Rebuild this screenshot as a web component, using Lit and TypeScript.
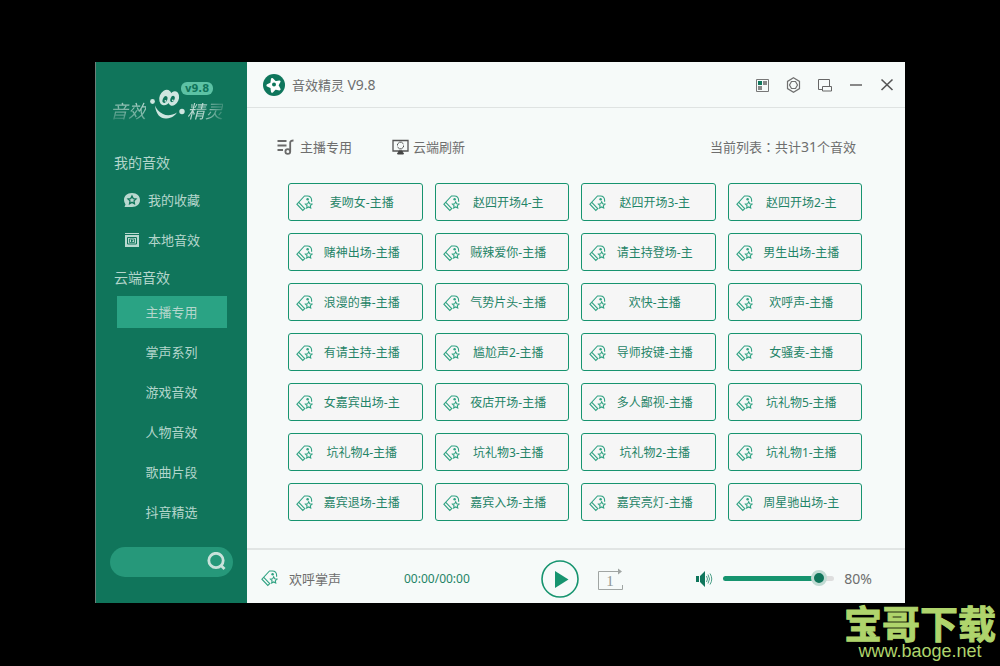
import { LitElement, html, css } from "lit";
import { classMap } from "lit/directives/class-map.js";
import { styleMap } from "lit/directives/style-map.js";

const CLOUD_LISTS = ["主播专用", "掌声系列", "游戏音效", "人物音效", "歌曲片段", "抖音精选"];

const SOUNDS = [
  "麦吻女-主播", "赵四开场4-主", "赵四开场3-主", "赵四开场2-主",
  "赌神出场-主播", "贼辣爱你-主播", "请主持登场-主", "男生出场-主播",
  "浪漫的事-主播", "气势片头-主播", "欢快-主播", "欢呼声-主播",
  "有请主持-主播", "尴尬声2-主播", "导师按键-主播", "女骚麦-主播",
  "女嘉宾出场-主", "夜店开场-主播", "多人鄙视-主播", "坑礼物5-主播",
  "坑礼物4-主播", "坑礼物3-主播", "坑礼物2-主播", "坑礼物1-主播",
  "嘉宾退场-主播", "嘉宾入场-主播", "嘉宾亮灯-主播", "周星驰出场-主",
];

const STAR = "M0-5 1.6-1.7 5-1.3 2.5 1.1 3.1 4.6 0 2.9-3.1 4.6-2.5 1.1-5-1.3-1.6-1.7Z";

const tagIcon = html`<svg class="tag" viewBox="0 0 17 17" width="17" height="17" aria-hidden="true">
  <g fill="none" stroke="currentColor" stroke-width="1.1">
    <path d="M15.6 6.8V5Q15.400 1.200 11.500 1H8.500L.9 9.200l5.900 6.300 2.500-2.300M2.800 7.300l5.900 6.300" />
    <path transform="translate(12.7 10) scale(.66)" stroke-width="1.6" d=${STAR} />
  </g>
  <circle cx="11.600" cy="4.300" r="1.200" fill="currentColor" />
</svg>`;

class AppRoot extends LitElement {
  static properties = {
    active: { state: true },
    level: { state: true },
  };

  declare active: string;
  declare level: number;

  constructor() {
    super();
    this.active = CLOUD_LISTS[0];
    this.level = 92;
  }

  static styles = css`
    :host {
      display: block;
      font-family: "Noto Sans", "Noto Sans CJK SC", sans-serif;
      font-size: 13px;
      line-height: 20px;
      color: #6e6e6e;
    }
    * { box-sizing: border-box; }
    button, input { font: inherit; color: inherit; margin: 0; padding: 0; border: 0; background: none; }
    button { cursor: pointer; }
    svg { display: block; flex: none; }
    .desktop {
      min-height: 100vh;
      background: #000;
      padding: 62px 95px 63px;
      display: flex;
      position: relative;
    }
    .window { flex: 1; display: flex; background: #f6faf9; min-width: 0; }

    .sidebar {
      flex: none;
      width: 152px;
      background: #10755b;
      border-left: 1px solid #6d7f79;
      color: #b4d6cc;
      display: flex;
      flex-direction: column;
      padding: 22px 14px 26px;
    }
    .logo { display: flex; position: relative; height: 40px; margin-bottom: 29px; }
    .logo svg { margin: 0 1px 0 2px; }
    .logo-word {
      font-size: 18px;
      font-style: italic;
      line-height: 20px;
      padding-top: 17px;
      color: transparent;
      background: linear-gradient(15deg, #3b8d77 10%, #b9d9d0 60%);
      background-clip: text;
      -webkit-background-clip: text;
    }
    .logo-word.end { background-image: linear-gradient(100deg, #b9d9d0 45%, #2b836b); }
    .badge {
      position: absolute;
      left: 71px;
      top: -2px;
      width: 32px;
      height: 13px;
      border-radius: 6px;
      background: #5cc2a4;
      color: #10755b;
      font-family: "DejaVu Sans", sans-serif;
      font-size: 10px;
      font-weight: 700;
      line-height: 13px;
      text-align: center;
    }
    .group { font-size: 14px; font-weight: 400; line-height: 20px; padding-left: 4px; margin: 0; }
    .side-link {
      display: flex;
      align-items: center;
      gap: 7px;
      height: 32px;
      margin-bottom: 8px;
      padding-left: 13px;
      color: inherit;
      text-decoration: none;
    }
    .mine { padding-top: 11px; }
    .cloud { padding: 8px 6px 0 7px; }
    .cloud .side-link { justify-content: center; padding: 0 1px 0 0; }
    .cloud .side-link.on { background: #2aa384; }
    .mine .side-link:last-child { margin-bottom: 12px; }
    .search {
      margin: auto 0 0;
      display: flex;
      align-items: center;
      height: 30px;
      border-radius: 15px;
      background: #26987a;
      padding: 0 7px 0 14px;
      width: 123px;
    }
    .search input { flex: 1; min-width: 0; outline: none; }

    .main { flex: 1; min-width: 0; display: flex; flex-direction: column; }
    .title-bar {
      display: flex;
      align-items: center;
      height: 46px;
      border-bottom: 1px solid #dfe3e2;
      padding: 0 10px 0 16px;
      gap: 7px;
    }
    .title { font-size: 13px; font-weight: 400; margin: 0; flex: 1; }
    .latin { font-size: 14px; }
    .win-actions { display: flex; gap: 15px; }
    .content { flex: 1; padding: 29px 43px 27px 41px; }
    .tools { display: flex; align-items: center; height: 20px; margin: 0 6px 26px -12px; }
    .tool { display: flex; align-items: center; gap: 4px; margin-right: 40px; }
    .count { margin-left: auto; }
    .colon { font-family: "Noto Sans CJK TC", sans-serif; }
    .grid { display: grid; grid-template-columns: repeat(4, 1fr); gap: 12px; }
    .sound {
      display: flex;
      align-items: center;
      height: 38px;
      border: 1px solid #16946f;
      border-radius: 3px;
      background: #f6f6f6;
      color: #1f8467;
      font-size: 12px;
      padding: 2px 11px 0 7px;
      min-width: 0;
    }
    .sound span { flex: 1; text-align: center; white-space: nowrap; }
    .tag { color: #2fa282; }

    .player {
      display: flex;
      align-items: center;
      height: 55px;
      border-top: 2px solid #e1e5e4;
      padding: 4px 33px 0 14px;
    }
    .track { width: 126px; padding-left: 11px; }
    .time { color: #1f8467; font-size: 12px; }
    .play { margin-left: auto; }
    .repeat { margin: 0 auto 0 18px; }
    .volume { display: flex; align-items: center; gap: 10px; }
    .volume input {
      -webkit-appearance: none;
      appearance: none;
      width: 111px;
      height: 16px;
    }
    .volume input::-webkit-slider-runnable-track {
      height: 5px;
      border-radius: 3px;
      background: linear-gradient(90deg, #16946f var(--fill), #dedede var(--fill));
    }
    .volume input::-webkit-slider-thumb {
      -webkit-appearance: none;
      width: 16px;
      height: 16px;
      margin-top: -6px;
      border-radius: 50%;
      border: 3px solid #c0dbd3;
      background: #10755b;
    }
    .percent { font-size: 14px; }

    .watermark {
      position: absolute;
      right: 4px;
      bottom: 6px;
      color: #afd46c;
      text-align: center;
    }
    .mark-name {
      font-family: "Noto Sans CJK SC", sans-serif;
      font-size: 38px;
      font-weight: 700;
      line-height: 40px;
      -webkit-text-stroke: 1px #afd46c;
      display: block;
    }
    .mark-site { font-family: "Liberation Sans", sans-serif; font-size: 18px; line-height: 18px; display: block; }
  `;

  private onLevel(e: Event) {
    this.level = Number((e.target as HTMLInputElement).value);
  }

  private renderSidebar() {
    return html`<aside class="sidebar">
      <div class="logo">
        <span class="logo-word">音效</span>
        <svg width="38" height="40" viewBox="0 0 38 40" aria-hidden="true">
          <g fill="#cfe6e0">
            <circle cx="4.500" cy="17.500" r="2.400" />
            <circle cx="34" cy="27.500" r="2.700" />
            <ellipse cx="17.500" cy="13.500" rx="6" ry="8" transform="rotate(22 17.500 13.500)" />
            <ellipse cx="25.500" cy="14.500" rx="5.200" ry="7.500" transform="rotate(22 25.500 14.500)" />
            <path d="M7 21.500C8 31 13 35 18.500 34.500 24 34 27 31.500 29 28.500 24 31.500 19 32 15 30 10.500 28 8.500 25 7 21.500Z" />
          </g>
          <g fill="#10755b">
            <ellipse cx="17" cy="15.500" rx="2.200" ry="3.600" transform="rotate(22 17 15.500)" />
            <ellipse cx="24.500" cy="15" rx="2" ry="3.300" transform="rotate(22 24.500 15)" />
          </g>
          <g fill="#cfe6e0">
            <circle cx="17.400" cy="16.800" r=".9" /><circle cx="24.800" cy="16.300" r=".9" />
          </g>
        </svg>
        <span class="logo-word end">精灵</span>
        <span class="badge">v9.8</span>
      </div>
      <h2 class="group">我的音效</h2>
      <nav class="mine">
        <a class="side-link" href="#favorites">
          <svg width="18" height="16" viewBox="0 0 18 16" aria-hidden="true">
            <path fill="#b9d9d0" d="M9 1C14 1 17 4 17 8s-3 7-8 7H1.500l1-2.500Q1 10.500 1 8C1 4 4 1 9 1Z" />
            <path fill="none" stroke="#10755b" stroke-width="1.600" transform="translate(9 8) scale(.8)" d=${STAR} />
          </svg>我的收藏</a>
        <a class="side-link" href="#local">
          <svg width="18" height="16" viewBox="0 0 18 16" aria-hidden="true">
            <path fill="#b9d9d0" d="M2 1h14v1H2zM2 3h14v12H2z" />
            <path fill="none" stroke="#10755b" d="M4.500 5.500h9v6.500h-9z" />
            <path fill="none" stroke="#10755b" stroke-width=".8" d="M6.500 7h5v3.500h-5z" />
            <path fill="#10755b" d="M8 7.300l2.500 1.500L8 10.300z" />
          </svg>本地音效</a>
      </nav>
      <h2 class="group">云端音效</h2>
      <nav class="cloud">
        ${CLOUD_LISTS.map((name) => html`<a
          href="#cloud"
          class=${classMap({ "side-link": true, on: name === this.active })}
          @click=${() => (this.active = name)}>${name}</a>`)}
      </nav>
      <form class="search" role="search" @submit=${(e: Event) => e.preventDefault()}>
        <input type="text" aria-label="搜索" />
        <button type="submit" aria-label="搜索">
          <svg width="20" height="20" viewBox="0 0 20 20" fill="none" stroke="#c9e2db" stroke-width="2.800" aria-hidden="true">
            <circle cx="10" cy="8.500" r="7.200" /><path d="M14.500 13l4 4" />
          </svg>
        </button>
      </form>
    </aside>`;
  }

  private renderTitleBar() {
    return html`<header class="title-bar">
      <svg width="22" height="22" viewBox="0 0 22 22" aria-hidden="true">
        <circle cx="11" cy="11" r="11" fill="#0f765c" />
        <path fill="#fff" stroke="#fff" stroke-width="1.800" stroke-linejoin="round" transform="translate(11 11) rotate(-18) scale(1.250)" d=${STAR} />
        <circle cx="11" cy="10.500" r="2" fill="#0f765c" />
      </svg>
      <h1 class="title">音效精灵 <span class="latin">V9.8</span></h1>
      <div class="win-actions">
        <button aria-label="皮肤">
          <svg width="16" height="16" viewBox="0 0 16 16" aria-hidden="true">
            <path fill="none" stroke="#777" d="M1.500 2.500h12v12h-12z" />
            <path fill="#0f765c" d="M3 4h4v4H3z" /><path fill="#888" d="M8 4h4v4H8zM3 9h4v4H3z" />
          </svg>
        </button>
        <button aria-label="设置">
          <svg width="16" height="16" viewBox="0 0 16 16" fill="none" stroke="#707070" stroke-width="1.200" aria-hidden="true">
            <path d="M7.500 .8l6 3.600v7.200l-6 3.600-6-3.600V4.400z" /><path d="M5.500 4.500h4l2 3.500-2 3.500h-4L3.500 8z" />
          </svg>
        </button>
        <button aria-label="迷你模式">
          <svg width="16" height="16" viewBox="0 0 16 16" fill="none" stroke="#666" aria-hidden="true">
            <path d="M5 12.500H1.500v-10h11V9M5.500 9.500h9v4.500h-9z" />
          </svg>
        </button>
        <button aria-label="最小化">
          <svg width="16" height="16" viewBox="0 0 16 16" stroke="#888" stroke-width="2" aria-hidden="true"><path d="M2 8h12" /></svg>
        </button>
        <button aria-label="关闭">
          <svg width="16" height="16" viewBox="0 0 16 16" stroke="#555" stroke-width="1.600" aria-hidden="true"><path d="M2.500 2.500l11 10.500M13.500 2.500L2.500 13" /></svg>
        </button>
      </div>
    </header>`;
  }

  render() {
    return html`<div class="desktop">
      <div class="window">
        ${this.renderSidebar()}
        <main class="main">
          ${this.renderTitleBar()}
          <section class="content">
            <div class="tools">
              <button class="tool">
                <svg width="20" height="18" viewBox="0 0 20 18" fill="none" stroke="#6a6a6a" stroke-width="1.800" aria-hidden="true">
                  <path d="M1.500 3h9M1.500 7.500h9M1.500 12h5.500M14.200 13.500V4.500q0-2 3.300-2" /><circle cx="11.800" cy="13.500" r="2.400" />
                </svg>主播专用</button>
              <button class="tool">
                <svg width="17" height="18" viewBox="0 0 17 18" fill="none" stroke="#555" aria-hidden="true">
                  <path d="M1 2.500h15v10.500H1z" stroke-width="1.300" />
                  <path d="M5.500 7.500V6l2-1.800h2l2 1.800M11.500 7.500V9l-2 1.800h-2l-2-1.800" />
                  <path d="M7 13h3l1.500 3h-6z" fill="#444" stroke="#444" />
                </svg>云端刷新</button>
              <span class="count">当前列表<span class="colon">：</span>共计<span class="latin">31</span>个音效</span>
            </div>
            <div class="grid">
              ${SOUNDS.map((name) => html`<button class="sound">${tagIcon}<span>${name}</span></button>`)}
            </div>
          </section>
          <footer class="player">
            ${tagIcon}
            <span class="track">欢呼掌声</span>
            <span class="time">00:00/00:00</span>
            <button class="play" aria-label="播放">
              <svg width="38" height="38" viewBox="0 0 38 38" aria-hidden="true">
                <circle cx="19" cy="19" r="18" fill="none" stroke="#16946f" stroke-width="1.600" />
                <path fill="#16946f" d="M14 11l13.500 8.500L14 28z" />
              </svg>
            </button>
            <button class="repeat" aria-label="单曲循环">
              <svg width="27" height="24" viewBox="0 0 27 24" aria-hidden="true">
                <path fill="none" stroke="#a0a5a3" d="M22 4.500H1.500v18h24V18" />
                <path fill="#a0a5a3" d="M21 1.500l4 3-4 3z" />
                <text x="13" y="19" text-anchor="middle" font-family="Liberation Serif" font-size="15" fill="#909593">1</text>
              </svg>
            </button>
            <div class="volume">
              <svg width="18" height="18" viewBox="0 0 18 18" aria-hidden="true">
                <path fill="#0f765c" d="M1 6h3v6H1zM5 6l5-5v16l-5-5z" />
                <path fill="none" stroke="#4a9f87" d="M11.500 6q2 3 0 6M13 4.500q3 4.500 0 9M15 3.500q3.500 5.500 0 11" />
              </svg>
              <input type="range" min="0" max="100" aria-label="音量"
                .value=${String(this.level)}
                style=${styleMap({ "--fill": `${this.level}%` })}
                @input=${this.onLevel} />
              <span class="percent">80%</span>
            </div>
          </footer>
        </main>
      </div>
      <div class="watermark">
        <span class="mark-name">宝哥下载</span>
        <span class="mark-site">www.baoge.net</span>
      </div>
    </div>`;
  }
}

customElements.define("app-root", AppRoot);
